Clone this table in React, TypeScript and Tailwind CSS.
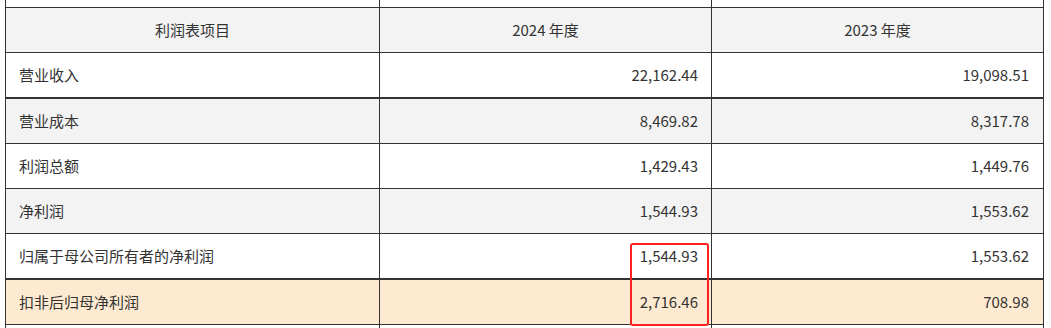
import React from "react";

const rows: { label: string; a: string; b: string; bg: string; thick?: boolean }[] = [
  { label: "营业收入", a: "22,162.44", b: "19,098.51", bg: "bg-white", thick: true },
  { label: "营业成本", a: "8,469.82", b: "8,317.78", bg: "bg-[#f3f3f3]" },
  { label: "利润总额", a: "1,429.43", b: "1,449.76", bg: "bg-white" },
  { label: "净利润", a: "1,544.93", b: "1,553.62", bg: "bg-[#f3f3f3]" },
  { label: "归属于母公司所有者的净利润", a: "1,544.93", b: "1,553.62", bg: "bg-white", thick: true },
  { label: "扣非后归母净利润", a: "2,716.46", b: "708.98", bg: "bg-[#feead0]" },
];

export default function App() {
  return (
    <div
      className="relative w-[1051px] h-[328px] overflow-hidden bg-white text-[#333] text-[15px]"
      style={{ fontFamily: '"Noto Sans CJK SC", "Noto Sans", sans-serif' }}
    >
      <div className="ml-[5px] w-[1039px] border-l border-r border-[#333]">
        {/* partial row above */}
        <div className="flex h-[8px] border-b border-[#333]">
          <div className="w-[374px] border-r border-[#333]" />
          <div className="w-[332px] border-r border-[#333]" />
          <div className="flex-1" />
        </div>
        {/* header */}
        <div className="flex h-[45px] border-b border-[#333] bg-[#f3f3f3]">
          <div className="w-[374px] border-r border-[#333] flex items-center justify-center">利润表项目</div>
          <div className="w-[332px] border-r border-[#333] flex items-center justify-center">2024 年度</div>
          <div className="flex-1 flex items-center justify-center">2023 年度</div>
        </div>
        {rows.map((r) => (
          <div
            key={r.label}
            className={`flex ${r.thick ? "h-[46px] border-b-2" : "h-[45px] border-b"} border-[#333] ${r.bg}`}
          >
            <div className="w-[374px] border-r border-[#333] flex items-center pl-[13px]">{r.label}</div>
            <div className="w-[332px] border-r border-[#333] flex items-center justify-end pr-[13px]">{r.a}</div>
            <div className="flex-1 flex items-center justify-end pr-[14px]">{r.b}</div>
          </div>
        ))}
        <div className="flex h-[10px]">
          <div className="w-[374px] border-r border-[#333]" />
          <div className="w-[332px] border-r border-[#333]" />
          <div className="flex-1" />
        </div>
      </div>
      <div className="absolute left-[630px] top-[243px] w-[79px] h-[83px] border-2 border-[#ff2020] rounded-[3px]" />
    </div>
  );
}
